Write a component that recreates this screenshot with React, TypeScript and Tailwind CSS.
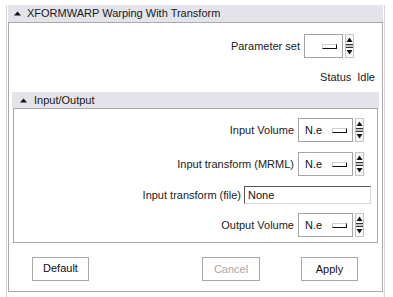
import React from 'react';

const Arrows: React.FC = () => (
  <svg width="9" height="24" viewBox="0 0 9 24" className="shrink-0">
    <rect x="0.5" y="0.5" width="8" height="11" fill="#fafafa" stroke="#c4c4c4" />
    <rect x="0.5" y="12.5" width="8" height="11" fill="#fafafa" stroke="#c4c4c4" />
    <polygon points="1.5,8 4.5,3.5 7.5,8" fill="#111" />
    <line x1="1" y1="10.5" x2="8" y2="10.5" stroke="#333" />
    <line x1="1" y1="13.5" x2="8" y2="13.5" stroke="#333" />
    <polygon points="1.5,16 7.5,16 4.5,20.5" fill="#111" />
  </svg>
);

const MenuGlyph: React.FC = () => (
  <div className="h-[5px] w-[15px] border border-t-[#d0d0d0] border-l-[#d0d0d0] border-b-[#111] border-r-[#111] bg-white" />
);

interface NodeSelectorProps {
  width: number;
  value?: string;
}

const NodeSelector: React.FC<NodeSelectorProps> = ({ value }) => (
  <div className="flex items-center gap-[2px]">
    {value ? (
      <div className="flex h-[24px] w-[55px] items-center justify-between border border-[#a4a4a4] bg-white pl-[6px] pr-[5px]">
        <span className="text-[11px] text-[#111]">{value}</span>
        <MenuGlyph />
      </div>
    ) : (
      <div className="flex h-[24px] w-[39px] items-center justify-end border border-[#a4a4a4] bg-white pr-[5px]">
        <MenuGlyph />
      </div>
    )}
    <Arrows />
  </div>
);

const Triangle: React.FC = () => (
  <svg width="7" height="5" viewBox="0 0 7 5" className="shrink-0">
    <polygon points="0,4.5 3.5,0.5 7,4.5" fill="#111" />
  </svg>
);

const Button: React.FC<{ label: string; disabled?: boolean; w: string }> = ({ label, disabled, w }) => (
  <button
    disabled={disabled}
    className={`h-[24px] ${w} border border-[#a8a8a8] bg-white text-[11px] ${disabled ? 'text-[#a8a8a8]' : 'text-[#111]'}`}
  >
    {label}
  </button>
);

const App: React.FC = () => {
  return (
    <div
      className="h-[297px] w-[393px] overflow-hidden bg-white pt-[5px]"
      style={{ fontFamily: '"Liberation Sans", Arial, sans-serif' }}
    >
      <div className="ml-[6px] flex h-[300px] w-[379px] flex-col border-x border-[#d6d6d6] px-[1px]">
        {/* main panel header */}
        <div className="flex h-[17px] items-center gap-[6px] bg-[#e3e3e9] pl-[6px]">
          <Triangle />
          <span className="text-[11px] text-[#1a1a1a]">XFORMWARP Warping With Transform</span>
        </div>

        <div className="flex h-[270px] flex-col border border-[#a9a9a9]">
          <div className="mt-[11px] flex items-center justify-end gap-[4px] pr-[28px]">
            <span className="text-[11px] text-[#1a1a1a]">Parameter set</span>
            <NodeSelector width={39} />
          </div>

          <div className="mt-[13px] flex justify-end gap-[6px] pr-[7px] text-[11px] leading-[13px] text-[#1a1a1a]">
            <span>Status</span>
            <span>Idle</span>
          </div>

          {/* Input/Output section */}
          <div className="mx-[3px] mt-[8px] flex flex-col">
            <div className="flex h-[16px] items-center gap-[7px] bg-[#e3e3e9] pl-[8px]">
              <Triangle />
              <span className="text-[11px] text-[#1a1a1a]">Input/Output</span>
            </div>
            <div className="mx-[1px] flex h-[135px] flex-col border border-[#a9a9a9] pt-[9px]">
              <div className="flex items-center justify-end gap-[4px] pr-[13px]">
                <span className="text-[11px] text-[#1a1a1a]">Input Volume</span>
                <NodeSelector width={55} value="N.e" />
              </div>
              <div className="mt-[10px] flex items-center justify-end gap-[4px] pr-[13px]">
                <span className="text-[11px] text-[#1a1a1a]">Input transform (MRML)</span>
                <NodeSelector width={55} value="N.e" />
              </div>
              <div className="mt-[10px] flex items-center justify-end gap-[3px] pr-[6px]">
                <span className="text-[11px] text-[#1a1a1a]">Input transform (file)</span>
                <div className="flex h-[18px] w-[127px] items-center border border-t-[#555] border-l-[#555] border-b-[#d8d8d8] border-r-[#d8d8d8] bg-white pl-[3px]">
                  <span className="text-[11px] text-[#111]">None</span>
                </div>
              </div>
              <div className="mt-[9px] flex items-center justify-end gap-[4px] pr-[13px]">
                <span className="text-[11px] text-[#1a1a1a]">Output Volume</span>
                <NodeSelector width={55} value="N.e" />
              </div>
            </div>
          </div>

          <div className="mt-[13px] flex items-center pl-[23px]">
            <Button label="Default" w="w-[57px]" />
            <div className="ml-[113px]">
              <Button label="Cancel" disabled w="w-[58px]" />
            </div>
            <div className="ml-[41px]">
              <Button label="Apply" w="w-[57px]" />
            </div>
          </div>
        </div>
      </div>
    </div>
  );
};

export default App;
